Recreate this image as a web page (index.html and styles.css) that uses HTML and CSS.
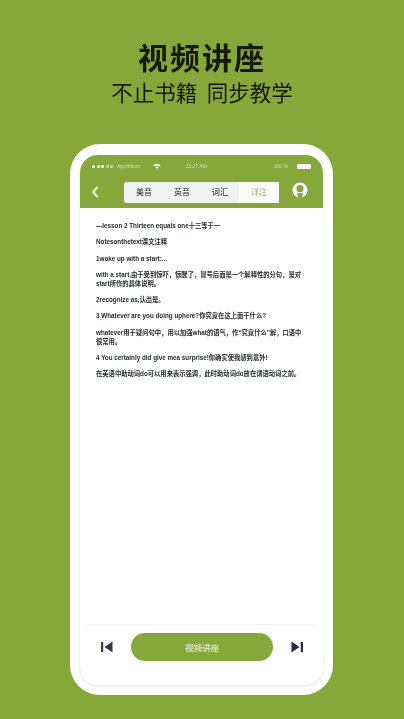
FILE: index.html
```html
<!DOCTYPE html>
<html lang="zh">
<head>
<meta charset="utf-8">
<title>视频讲座</title>
<link rel="stylesheet" href="styles.css">
</head>
<body>
<header class="hero">
  <h1 class="hero-title">视频讲座</h1>
  <p class="hero-sub">不止书籍&nbsp;&nbsp;同步教学</p>
</header>
<main class="phone">
  <div class="screen">
    <section class="app-head">
      <div class="status">
        <span class="carrier"><span class="dots"><i class="dot"></i><i class="dot"></i><i class="dot"></i><i class="dot hollow"></i><i class="dot hollow"></i></span>AppAdium</span>
        <svg class="wifi" viewBox="0 0 10 8"><path d="M.5 2.6C3 .4 7 .4 9.500 2.600L8.300 3.800C6.300 2.200 3.700 2.200 1.700 3.800ZM2.700 4.700C4 3.700 6 3.700 7.300 4.700L6.200 5.800C5.500 5.300 4.500 5.300 3.800 5.800ZM5 6.200L6 7.200 5 8 4 7.200Z" fill="#fff"/></svg>
        <span class="time">11:27 AM</span>
        <span class="pct">100 %</span>
        <span class="battery"></span>
      </div>
      <nav class="nav">
        <svg class="back" viewBox="0 0 8 12"><path d="M6.500 1L2 6l4.500 5" fill="none" stroke="#e9efd8" stroke-width="2"/></svg>
        <div class="tabs">
          <span class="tab">美音</span>
          <span class="tab">英音</span>
          <span class="tab wide">词汇</span>
          <span class="tab active">详注</span>
        </div>
        <svg class="user" viewBox="0 0 18 18"><circle cx="9" cy="9" r="8.500" fill="#fff"/><circle cx="9" cy="7.500" r="4" fill="#86a83a"/><path d="M3.500 15.500C4 11.500 14 11.500 14.500 15.500L9 18Z" fill="#86a83a"/><path d="M1.500 13.500L5.500 11.500 6.500 17.500ZM16.500 13.500L12.500 11.500 11.500 17.500Z" fill="#fff"/></svg>
      </nav>
    </section>
    <article class="notes">
      <p>---lesson 2 Thirteen equals one十三等于一</p>
      <p>Notesonthetext课文注释</p>
      <p>1woke up with a start:...</p>
      <p>with a start,由于受到惊吓，惊醒了，冒号后面是一个解释性的分句，是对start所作的具体说明。</p>
      <p>2recognize as,认出是。</p>
      <p>3 Whatever are you doing uphere?你究竟在这上面干什么?</p>
      <p>whatever用于疑问句中，用以加强what的语气，作“究竟什么”解，口语中很常用。</p>
      <p>4 You certainly did give mea surprise!你确实使我感到意外!</p>
      <p>在英语中助动词do可以用来表示强调，此时助动词do放在谓语动词之前。</p>
    </article>
    <footer class="controls">
      <svg class="skip" viewBox="0 0 12 12"><path d="M0 1h2.200v10H0ZM11.500 .5v11L3.500 6Z" fill="#33384a"/></svg>
      <button class="cta" type="button">视频讲座</button>
      <svg class="skip" viewBox="0 0 12 12"><path d="M.5 .5v11L8.500 6ZM9.800 1H12v10H9.800Z" fill="#262b3d"/></svg>
    </footer>
  </div>
</main>
</body>
</html>
```
FILE: styles.css
```css
* { box-sizing: border-box; }
html, body { margin: 0; padding: 0; }
body {
  width: 404px;
  height: 719px;
  overflow: hidden;
  background: #86a83a;
  font-family: "Noto Sans CJK SC", "Liberation Sans", sans-serif;
}
.hero { padding-top: 36px; text-align: center; color: #16190c; }
.hero-title { margin: 0; font-size: 30px; line-height: 40px; font-weight: 700; letter-spacing: 2px; filter: blur(.3px); }
.hero-sub { margin: 2px 0 0; font-size: 21.500px; line-height: 28px; font-weight: 400; filter: blur(.3px); }
.phone {
  width: 263px;
  height: 551px;
  margin: 38px 0 0 70px;
  padding: 11px 10px 10px;
  background: #fff;
  border-radius: 30px;
}
.screen {
  height: 530px;
  display: flex;
  flex-direction: column;
  background: #fff;
  border-radius: 18px;
  overflow: hidden;
  box-shadow: 0 1px 3px rgba(70,75,100,.18);
}
.app-head { height: 53px; flex: none; background: #86a83a; }
.status { height: 21px; display: flex; align-items: center; padding: 1px 4px 0 12px; color: #d5e0b2; font-size: 5px; font-family: "Liberation Sans", sans-serif; filter: blur(.3px); }
.carrier { width: 54px; flex: none; display: flex; align-items: center; gap: 4px; }
.dots { display: flex; gap: 1.500px; }
.dot { width: 3px; height: 3px; border-radius: 50%; background: #fff; }
.dot.hollow { background: none; border: .5px solid #fff; }
.wifi { width: 8px; height: 7px; margin-left: 7px; }
.time { margin-left: 25px; }
.pct { margin-left: 67px; }
.battery { width: 14px; height: 5px; margin-left: 9px; border-radius: 1px; background: #fff; }
.nav { height: 32px; display: flex; align-items: flex-start; padding-top: 6px; }
.back { width: 8px; height: 12px; margin: 4px 0 0 11px; }
.tabs { width: 155px; height: 21px; margin-left: 25px; padding-left: 1px; display: flex; background: #f1f3f3; border-radius: 2px; font-size: 8px; color: #23281f; filter: blur(.25px); }
.tab { width: 38px; height: 21px; line-height: 20px; text-align: center; }
.tab.wide { font-size: 8.500px; line-height: 18px; }
.tab.active { width: 40px; background: #fafbf8; color: #9db46a; }
.user { width: 16px; height: 16px; margin: 0 0 0 13px; }
.notes { flex: 1; padding: 13px 20px 0 16px; font-size: 6.300px; line-height: 9px; font-weight: 700; color: #1f2326; filter: blur(.25px); font-family: "Liberation Sans", "Noto Sans CJK SC", sans-serif; }
.notes p { margin: 0 0 7.300px; }
.controls { height: 61px; flex: none; margin: 0 7px; border-top: 1px solid #f2f3f3; display: flex; align-items: flex-start; padding: 8px 5px 0 14px; }
.skip { width: 12px; height: 12px; flex: none; margin-top: 8px; }
.cta { width: 142px; height: 28px; margin: 0 18px 0 18px; border: 0; border-radius: 14px; background: #86a83a; color: #f3f6e8; font-size: 8.500px; font-family: inherit; }
```
